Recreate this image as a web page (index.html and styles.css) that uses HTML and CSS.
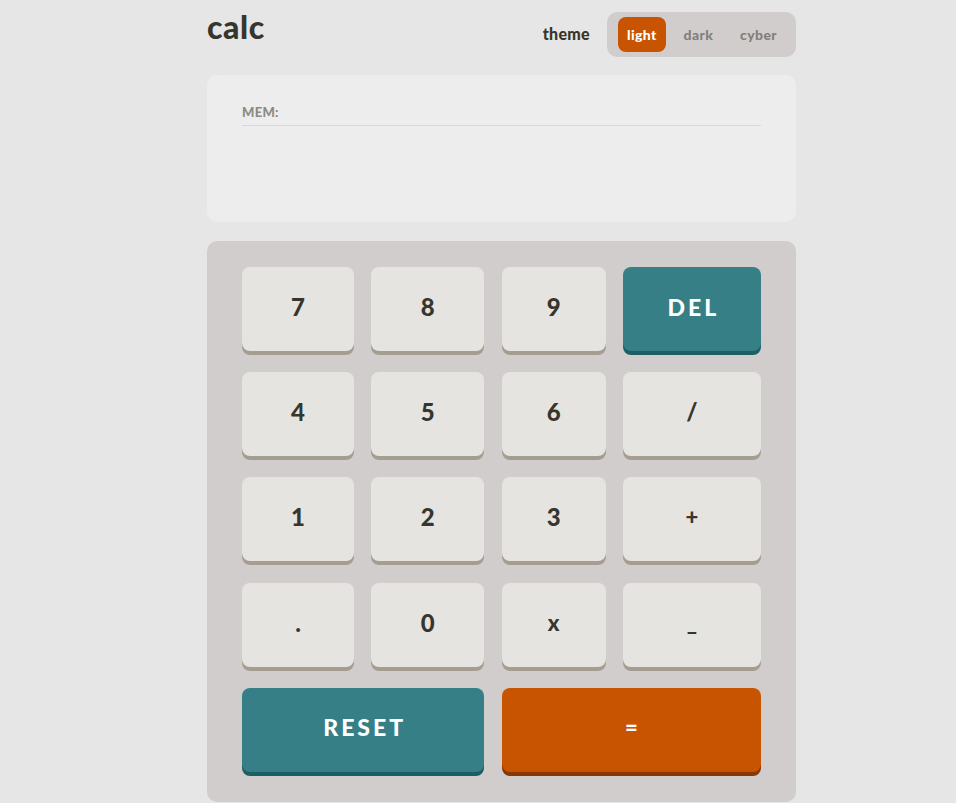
FILE: index.html
```html
<!DOCTYPE html>
<html lang="en">
<head>
<meta charset="utf-8">
<title>calc</title>
<link rel="stylesheet" href="styles.css">
</head>
<body>
<div class="app">
  <header class="header">
    <h1 class="logo">calc</h1>
    <div class="theme">
      <span class="theme-label">theme</span>
      <div class="toggle">
        <button class="opt active">light</button>
        <button class="opt">dark</button>
        <button class="opt">cyber</button>
      </div>
    </div>
  </header>
  <section class="display">
    <div class="mem">MEM:</div>
  </section>
  <section class="keypad">
    <button class="key">7</button>
    <button class="key">8</button>
    <button class="key">9</button>
    <button class="key key-blue">DEL</button>
    <button class="key">4</button>
    <button class="key">5</button>
    <button class="key">6</button>
    <button class="key">/</button>
    <button class="key">1</button>
    <button class="key">2</button>
    <button class="key">3</button>
    <button class="key key-op">+</button>
    <button class="key">.</button>
    <button class="key">0</button>
    <button class="key key-op">x</button>
    <button class="key key-op">_</button>
    <button class="key key-blue key-wide">RESET</button>
    <button class="key key-orange key-wide2">=</button>
  </section>
</div>
</body>
</html>
```
FILE: styles.css
```css
* { box-sizing: border-box; }
body {
  margin: 0;
  background: #e6e6e6;
  font-family: "Lato", "Liberation Sans", sans-serif;
  color: #36362c;
}
.app {
  width: 589px;
  margin-left: 207px;
}
.header {
  height: 75px;
  display: flex;
  justify-content: space-between;
  align-items: flex-start;
  padding-top: 11px;
}
.logo {
  margin: 0;
  font-size: 32px;
  font-weight: 900;
  line-height: 32px;
  color: #36362c;
  letter-spacing: 0.6px;
}
.theme {
  display: flex;
  align-items: center;
  gap: 17px;
  margin-top: 1px;
}
.theme-label {
  font-size: 16px;
  font-weight: 900;
  color: #36362c;
  letter-spacing: 0.3px;
  margin-bottom: 3px;
}
.toggle {
  display: flex;
  justify-content: space-between;
  width: 189px;
  background: #d2cdcd;
  border-radius: 10px;
  padding: 5px 10px 5px 11px;
  height: 45px;
}
.opt {
  border: 0;
  background: transparent;
  font-family: inherit;
  font-size: 14px;
  font-weight: 900;
  color: #857f79;
  height: 35px;
  padding: 0 9px;
  border-radius: 8px;
  letter-spacing: 0.4px;
}
.opt.active {
  background: #c85402;
  color: #ffffff;
}
.display {
  height: 147px;
  background: #ededed;
  border-radius: 10px;
  padding: 29px 35px 0;
  margin-bottom: 19px;
}
.mem {
  font-size: 13px;
  font-weight: 900;
  color: #8b8a83;
  letter-spacing: 0.3px;
  padding-bottom: 5px;
  border-bottom: 1px solid #d9d9d9;
}
.keypad {
  background: #d2cdcd;
  border-radius: 10px;
  padding: 26px 35px 30px;
  display: grid;
  grid-template-columns: 112fr 113fr 104fr 138fr;
  grid-auto-rows: 84px;
  column-gap: 17.3px;
  row-gap: 21.2px;
}
.key {
  border: 0;
  border-radius: 8px;
  background: #e5e4e1;
  box-shadow: 0 4px 0 #a69d91;
  font-family: inherit;
  font-size: 24px;
  font-weight: 900;
  color: #36362c;
  padding: 0 0 5px;
}
.key-op { font-size: 22px; }
.key-blue {
  background: #377f86;
  box-shadow: 0 4px 0 #1b5f65;
  color: #ffffff;
  letter-spacing: 3px;
  font-size: 23px;
  padding-left: 3px;
}
.key-orange {
  background: #c85402;
  box-shadow: 0 4px 0 #873901;
  color: #ffffff;
  font-size: 22px;
}
.key-wide { grid-column: 1 / span 2; }
.key-wide2 { grid-column: 3 / span 2; }
```
